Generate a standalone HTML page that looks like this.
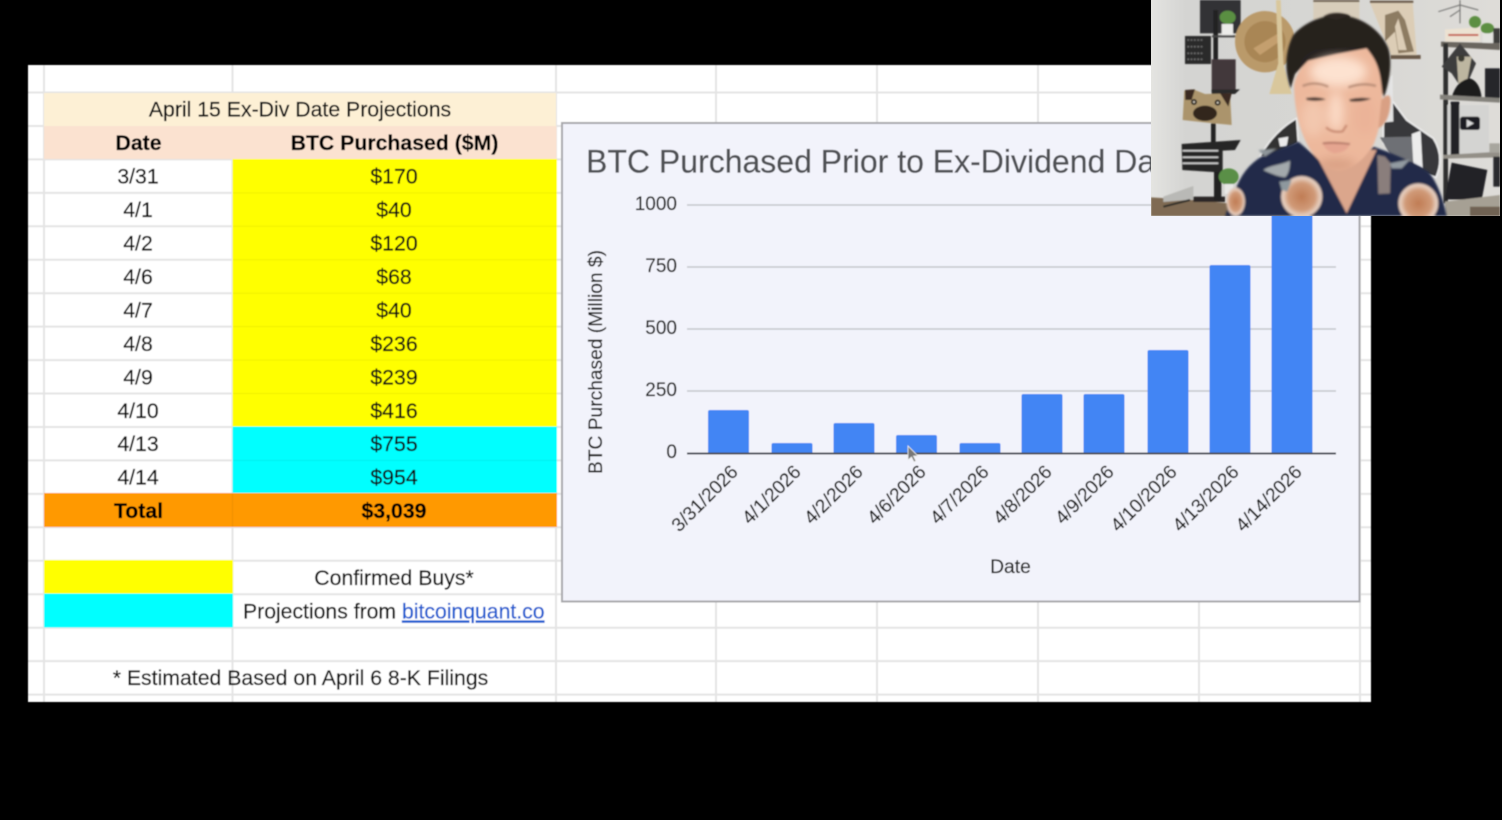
<!DOCTYPE html>
<html><head><meta charset="utf-8"><title>BTC Purchased</title>
<style>
html,body{margin:0;padding:0;background:#000;width:1502px;height:820px;overflow:hidden}
svg{display:block}
text{font-family:"Liberation Sans",Arial,sans-serif}
.t{font-size:21.25px;fill:#111;text-anchor:middle;stroke:#111;stroke-width:.25px}
.b{font-weight:bold;fill:#000;stroke:#000}
.l{fill:#1f1f1f;stroke:#1f1f1f;stroke-width:.2px}
.y{font-size:19px;fill:#1f1f1f;stroke:#1f1f1f;stroke-width:.15px;text-anchor:end}
</style></head><body>
<svg width="1502" height="820" viewBox="0 0 1502 820" xmlns="http://www.w3.org/2000/svg">
<defs>
<filter id="s" x="-2%" y="-2%" width="104%" height="104%"><feGaussianBlur stdDeviation="0.5"/></filter>
<filter id="w" x="-5%" y="-5%" width="110%" height="110%"><feGaussianBlur stdDeviation="2.200"/></filter>
<filter id="p" x="-5%" y="-5%" width="110%" height="110%"><feGaussianBlur stdDeviation="3"/></filter>
<filter id="f" x="-25%" y="-25%" width="150%" height="150%"><feGaussianBlur stdDeviation="14"/></filter>
<clipPath id="cam"><rect x="3" y="0" width="1047" height="648"/></clipPath>
<clipPath id="face"><path d="M432 262C434 320 445 390 480 448C505 485 535 510 565 512C610 510 650 470 672 430C690 385 702 320 695 262C690 210 680 180 650 140L480 150C450 180 432 220 432 262Z"/></clipPath>
<radialGradient id="peach"><stop offset="0" stop-color="#c07c54"/><stop offset=".65" stop-color="#d09a78"/><stop offset=".9" stop-color="#e6cdbd"/><stop offset="1" stop-color="#d8c0b4"/></radialGradient>
<linearGradient id="wall" x1="0" x2="1"><stop offset="0" stop-color="#e4e4e1"/><stop offset=".1" stop-color="#d4d4d2"/><stop offset=".5" stop-color="#d6d6d3"/><stop offset="1" stop-color="#dedcd8"/></linearGradient>
</defs>
<rect width="1502" height="820" fill="#000"/>
<g filter="url(#s)">
<rect x="28" y="65" width="1343" height="637" fill="#fff"/>
<g stroke="#e4e4e4" stroke-width="2">
<path d="M28 92.500H1371M28 126H1371M28 159.400H1371M28 192.900H1371M28 226.300H1371M28 259.800H1371M28 293.200H1371M28 326.600H1371M28 360.100H1371M28 393.500H1371M28 427H1371M28 460.400H1371M28 493.900H1371M28 527.300H1371M28 560.800H1371M28 594.200H1371M28 627.700H1371M28 661.100H1371M28 694.600H1371"/>
<path d="M44 65V702M232.500 65V702M556 65V702M716 65V702M877 65V702M1038 65V702M1199 65V702M1360 65V702"/>
</g>
<rect x="44" y="93" width="512" height="33" fill="#fdf0d5"/>
<rect x="44" y="126" width="188.500" height="33" fill="#fbe2d0"/>
<rect x="232.500" y="126" width="324" height="33" fill="#fbe2d0"/>
<rect x="232.500" y="159" width="324.500" height="267.500" fill="#ffff00"/>
<rect x="232.500" y="426.500" width="324.500" height="67" fill="#00ffff"/>
<rect x="44" y="493" width="513" height="34" fill="#ff9900"/>
<path d="M232.500 494V527" stroke="#ee8f00" stroke-width="1"/>
<rect x="44" y="560" width="189" height="33.500" fill="#ffff00"/>
<rect x="44" y="593.500" width="189" height="34" fill="#00ffff"/>
<g stroke="#f0f000" stroke-width="1"><path d="M233 192.900H557M233 226.300H557M233 259.800H557M233 293.200H557M233 326.600H557M233 360.100H557M233 393.500H557"/></g>
<path d="M233 460.400H557" stroke="#00f0f0" stroke-width="1"/>
<text class="t" x="300" y="116.500">April 15 Ex-Div Date Projections</text>
<text class="t b" x="138.500" y="150">Date</text>
<text class="t b" x="394.500" y="150">BTC Purchased ($M)</text>
<text class="t" x="138" y="183.500">3/31</text><text class="t" x="394" y="183.500">$170</text>
<text class="t" x="138" y="217">4/1</text><text class="t" x="394" y="217">$40</text>
<text class="t" x="138" y="250.500">4/2</text><text class="t" x="394" y="250.500">$120</text>
<text class="t" x="138" y="284">4/6</text><text class="t" x="394" y="284">$68</text>
<text class="t" x="138" y="317.500">4/7</text><text class="t" x="394" y="317.500">$40</text>
<text class="t" x="138" y="351">4/8</text><text class="t" x="394" y="351">$236</text>
<text class="t" x="138" y="384.500">4/9</text><text class="t" x="394" y="384.500">$239</text>
<text class="t" x="138" y="418">4/10</text><text class="t" x="394" y="418">$416</text>
<text class="t" x="138" y="451">4/13</text><text class="t" x="394" y="451">$755</text>
<text class="t" x="138" y="484.500">4/14</text><text class="t" x="394" y="484.500">$954</text>
<text class="t b" x="138.500" y="518">Total</text><text class="t b" x="394" y="518">$3,039</text>
<text class="t" x="394" y="585">Confirmed Buys*</text>
<text class="t" x="243" y="618.500" style="text-anchor:start;font-size:21.2px">Projections from <tspan fill="#1a5bd0" stroke="#1a5bd0" text-decoration="underline">bitcoinquant.co</tspan></text>
<text class="t" x="300.500" y="685">* Estimated Based on April 6 8-K Filings</text>

<rect x="562" y="123" width="797.500" height="478.500" fill="#f2f3fb" stroke="#a8a8ac" stroke-width="2"/>
<text x="586" y="172.500" font-size="32" fill="#505155" stroke="#505155" stroke-width=".25">BTC Purchased Prior to Ex-Dividend Date</text>
<g stroke="#c5c6cc" stroke-width="1.500"><path d="M687 205H1336M687 267H1336M687 329H1336M687 391H1336"/></g>
<text class="y" x="677" y="210">1000</text>
<text class="y" x="677" y="272">750</text>
<text class="y" x="677" y="334">500</text>
<text class="y" x="677" y="396">250</text>
<text class="y" x="677" y="458">0</text>
<text class="l" x="0" y="0" font-size="19.200" text-anchor="middle" transform="translate(602 362) rotate(-90)">BTC Purchased (Million $)</text>
<g fill="#4285f4">
<path d="M708 453V412a2 2 0 0 1 2-2H747a2 2 0 0 1 2 2V453Z"/>
<path d="M771.500 453V445a2 2 0 0 1 2-2H810.500a2 2 0 0 1 2 2V453Z"/>
<path d="M833.500 453V425a2 2 0 0 1 2-2H872.500a2 2 0 0 1 2 2V453Z"/>
<path d="M896 453V437a2 2 0 0 1 2-2H935a2 2 0 0 1 2 2V453Z"/>
<path d="M959.500 453V445a2 2 0 0 1 2-2H998.500a2 2 0 0 1 2 2V453Z"/>
<path d="M1021.500 453V396a2 2 0 0 1 2-2H1060.500a2 2 0 0 1 2 2V453Z"/>
<path d="M1083.500 453V396a2 2 0 0 1 2-2H1122.500a2 2 0 0 1 2 2V453Z"/>
<path d="M1147.500 453V352a2 2 0 0 1 2-2H1186.500a2 2 0 0 1 2 2V453Z"/>
<path d="M1209.500 453V267a2 2 0 0 1 2-2H1248.500a2 2 0 0 1 2 2V453Z"/>
<rect x="1271.500" y="210" width="41" height="243"/>
</g>
<path d="M687 453.500H1336" stroke="#4a4d55" stroke-width="2"/>
<g class="l" font-size="19" text-anchor="end">
<text transform="translate(739 473) rotate(-45)">3/31/2026</text>
<text transform="translate(802 473) rotate(-45)">4/1/2026</text>
<text transform="translate(864 473) rotate(-45)">4/2/2026</text>
<text transform="translate(927 473) rotate(-45)">4/6/2026</text>
<text transform="translate(990 473) rotate(-45)">4/7/2026</text>
<text transform="translate(1053 473) rotate(-45)">4/8/2026</text>
<text transform="translate(1115 473) rotate(-45)">4/9/2026</text>
<text transform="translate(1178 473) rotate(-45)">4/10/2026</text>
<text transform="translate(1240 473) rotate(-45)">4/13/2026</text>
<text transform="translate(1303 473) rotate(-45)">4/14/2026</text>
</g>
<text class="l" x="1010.500" y="573" font-size="19.300" text-anchor="middle">Date</text>
<path d="M908 446V460L911.500 457L914 462L916 461L913.500 456H918Z" fill="#777" stroke="#eee" stroke-width=".8"/>
</g>

<!-- webcam -->
<g transform="translate(1150 0) scale(.33333)">
<g clip-path="url(#cam)">
<rect x="3" y="0" width="1050" height="648" fill="url(#wall)"/>
<g filter="url(#w)">
<path d="M3 592L130 600L240 610V648H3Z" fill="#7f6b52"/>
<path d="M40 590L130 558V598L40 606Z" fill="#b9b9b6"/>
<path d="M40 620L120 600" stroke="#2c2a26" stroke-width="6"/>
<path d="M130 590H225V606H130Z" fill="#2a2826"/>
<rect x="150" y="0" width="122" height="100" fill="#333336"/>
<rect x="190" y="30" width="14" height="150" fill="#222"/>
<rect x="183" y="370" width="14" height="60" fill="#222"/>
<rect x="192" y="510" width="22" height="90" fill="#222"/>
<rect x="105" y="108" width="78" height="84" fill="#2c2c2c"/>
<path d="M112 120H160M112 140H160M112 160H160M112 178H160" stroke="#777" stroke-width="4" stroke-dasharray="5 5"/>
<rect x="186" y="106" width="70" height="6" fill="#444"/>
<rect x="185" y="178" width="72" height="98" fill="#43383a"/>
<path d="M185 268H270L255 282H185Z" fill="#2c2c2c"/>
<ellipse cx="233" cy="52" rx="24" ry="20" fill="#5a8f42"/>
<rect x="215" y="72" width="34" height="32" fill="#ececea"/>
<ellipse cx="345" cy="125" rx="90" ry="92" fill="#ba9a6b"/>
<ellipse cx="345" cy="125" rx="62" ry="62" fill="#a98655"/>
<path d="M310 145L385 100L388 125L330 165Z" fill="#c49f6e"/>
<path d="M378 0H392L400 190L425 282H358L385 190Z" fill="#d9c79c"/>
<path d="M103 272L130 268L165 282L240 280L245 375L170 368L98 360Z" fill="#ab946c"/>
<path d="M105 270L135 268L125 300L106 300Z" fill="#3a2b22"/>
<path d="M210 280H245L235 320Z" fill="#3a2b22"/>
<ellipse cx="165" cy="340" rx="36" ry="23" fill="#33281f"/>
<circle cx="132" cy="306" r="9" fill="#2c2620"/><circle cx="203" cy="308" r="9" fill="#2c2620"/>
<circle cx="132" cy="306" r="3" fill="#e6e0d0"/><circle cx="203" cy="308" r="3" fill="#e6e0d0"/>
<path d="M95 432L272 420L255 450L218 452V518L97 510Z" fill="#262626"/>
<path d="M98 452H205M98 472H205M98 490H205" stroke="#cfcfcf" stroke-width="5"/>
<ellipse cx="236" cy="530" rx="30" ry="25" fill="#5a8f46"/>
<rect x="224" y="552" width="26" height="30" fill="#e8e8e6"/>
<rect x="490" y="0" width="138" height="60" fill="#d8cdbb"/>
<rect x="490" y="0" width="138" height="6" fill="#6a5a48"/>
<path d="M520 58Q550 35 600 48L600 60H520Z" fill="#3a3028"/>
<path d="M660 8L788 4L800 165L725 170Z" fill="#dccdb6"/>
<rect x="660" y="2" width="130" height="7" fill="#6a5a48"/>
<rect x="722" y="165" width="90" height="12" fill="#6a5a48"/>
<path d="M705 45L745 32L765 60L792 155L745 160L735 95L705 125Z" fill="#8d7b62"/>
<path d="M745 55L770 150H745L735 80Z" fill="#dccdb6"/>
<path d="M865 35L930 15M930 15L985 30M930 0V70M900 50L930 30" stroke="#6c6c6a" stroke-width="3" fill="none"/>
<path d="M885 88L990 82V124L885 125Z" fill="#ece2d2"/>
<path d="M895 105H985" stroke="#c04a3a" stroke-width="5"/>
<ellipse cx="975" cy="66" rx="18" ry="18" fill="#5d8f42"/><ellipse cx="1012" cy="85" rx="20" ry="16" fill="#5d8f42"/>
<rect x="998" y="100" width="32" height="28" fill="#e4e4e0"/>
<rect x="1030" y="85" width="20" height="45" fill="#3c3c3a"/>
<path d="M873 125L1050 130V150L873 140Z" fill="#6a665f"/>
<rect x="880" y="130" width="14" height="480" fill="#2e2e2e"/>
<path d="M875 200L930 130L978 190L950 255L925 250L905 220Z" fill="#3c3c3e"/>
<path d="M920 170H965L950 250H925Z" fill="#bdb6a0"/>
<circle cx="934" cy="175" r="10" fill="#3a3a30"/>
<path d="M905 292Q920 240 960 235Q990 245 995 294Z" fill="#1a1a1e"/>
<rect x="1005" y="205" width="45" height="90" fill="#26262a"/>
<path d="M870 284L1050 294V308L870 298Z" fill="#84827c"/>
<rect x="892" y="315" width="125" height="152" fill="#d4d4d2"/>
<rect x="902" y="305" width="26" height="160" fill="#222226"/>
<rect x="930" y="350" width="60" height="40" rx="8" fill="#1d1d20"/>
<path d="M950 358L972 370L950 382Z" fill="#dadada"/>
<path d="M880 465L1050 455V472L880 476Z" fill="#938f87"/>
<rect x="1018" y="430" width="32" height="28" fill="#a8a69e"/>
<path d="M905 488L1012 510L995 600L885 598Z" fill="#202026"/>
<path d="M885 605L1050 585V648H885Z" fill="#a6a094"/>
<rect x="960" y="620" width="90" height="28" fill="#6f6252"/>
<rect x="1030" y="470" width="20" height="90" fill="#2b2b2d"/>
<path d="M330 470Q370 395 440 355L445 430L360 475Z" fill="#313133" stroke="#ececec" stroke-width="5"/>
<path d="M385 415L415 410L410 440L390 440Z" fill="#eaeaea"/>
<path d="M700 330L725 300L770 360L850 415Q885 470 858 532L800 515L700 430Z" fill="#39393b" stroke="#ededed" stroke-width="5"/>
<path d="M690 412L790 410L790 490L730 480Z" fill="#6e7074"/>
<path d="M785 402L812 392L818 505L790 492Z" fill="#ececec"/>
<path d="M704 240L728 225L730 365L690 368Z" fill="#e4e4e4"/>
</g>
<!-- person -->
<g filter="url(#p)">
<path d="M225 648L262 555Q290 490 350 462L445 425L520 490L590 530L670 440Q760 470 835 515Q872 560 890 648Z" fill="#242a48"/>
<path d="M490 450L590 640L680 450Z" fill="#dba68c"/>
<circle cx="455" cy="590" r="62" fill="url(#peach)"/>
<circle cx="805" cy="610" r="60" fill="url(#peach)"/>
<ellipse cx="257" cy="605" rx="28" ry="42" fill="url(#peach)"/>
<path d="M340 510C360 495 395 495 420 482C420 505 415 525 405 532C385 530 360 520 340 510Z" fill="#a3a9ac"/>
<path d="M388 545L425 540L412 575L395 570Z" fill="#8e989e"/>
<path d="M682 465L705 470L722 490L720 580L685 582Z" fill="#8a7e7c"/>
<path d="M720 490L780 478L755 505L725 505Z" fill="#929aa0"/>
<path d="M325 450L380 445L345 470Z" fill="#8f969a"/>
<!-- hair mass -->
<path d="M422 265C405 215 402 160 430 105C470 60 530 44 572 46C640 50 695 95 715 145C728 190 718 245 702 292L690 262L680 195L650 145L560 162L475 182L435 222Z" fill="#25211f"/>
<path d="M520 50Q550 30 600 46L560 60Z" fill="#2e2623"/>
<!-- face -->
<path d="M432 262C434 320 445 390 480 448C505 485 535 510 565 512C610 510 650 470 672 430C690 385 702 320 695 262C690 210 680 180 650 145L560 162L475 182C450 205 432 235 432 262Z" fill="#edb89c"/>
<g clip-path="url(#face)">
<g filter="url(#f)">
<ellipse cx="565" cy="215" rx="85" ry="45" fill="#fde2d0"/>
<ellipse cx="490" cy="355" rx="36" ry="55" fill="#f3c7ae"/>
<ellipse cx="645" cy="350" rx="34" ry="55" fill="#ebb398"/>
<ellipse cx="558" cy="335" rx="22" ry="60" fill="#fbdac6"/>
<ellipse cx="560" cy="495" rx="60" ry="20" fill="#d9a084"/>
</g>
</g>
<path d="M694 300Q722 270 722 305Q718 370 685 385Z" fill="#d9a084"/>
<path d="M458 258Q495 242 535 260" stroke="#b78c76" stroke-width="7" fill="none"/>
<path d="M595 262Q640 246 678 258" stroke="#b78c76" stroke-width="7" fill="none"/>
<path d="M468 294Q500 288 528 298Q500 306 470 300Z" fill="#4c3a34"/>
<path d="M598 298Q630 290 664 296Q635 308 600 304Z" fill="#4c3a34"/>
<path d="M528 382Q548 400 578 394L590 375" stroke="#c98b72" stroke-width="7" fill="none"/>
<path d="M518 428Q545 420 600 432Q590 458 552 460Q525 452 518 428Z" fill="#e5a590"/>
<path d="M518 430Q555 426 600 432" stroke="#9a5d50" stroke-width="4" fill="none"/>
</g>
</g>
</g>
</svg>
</body></html>
